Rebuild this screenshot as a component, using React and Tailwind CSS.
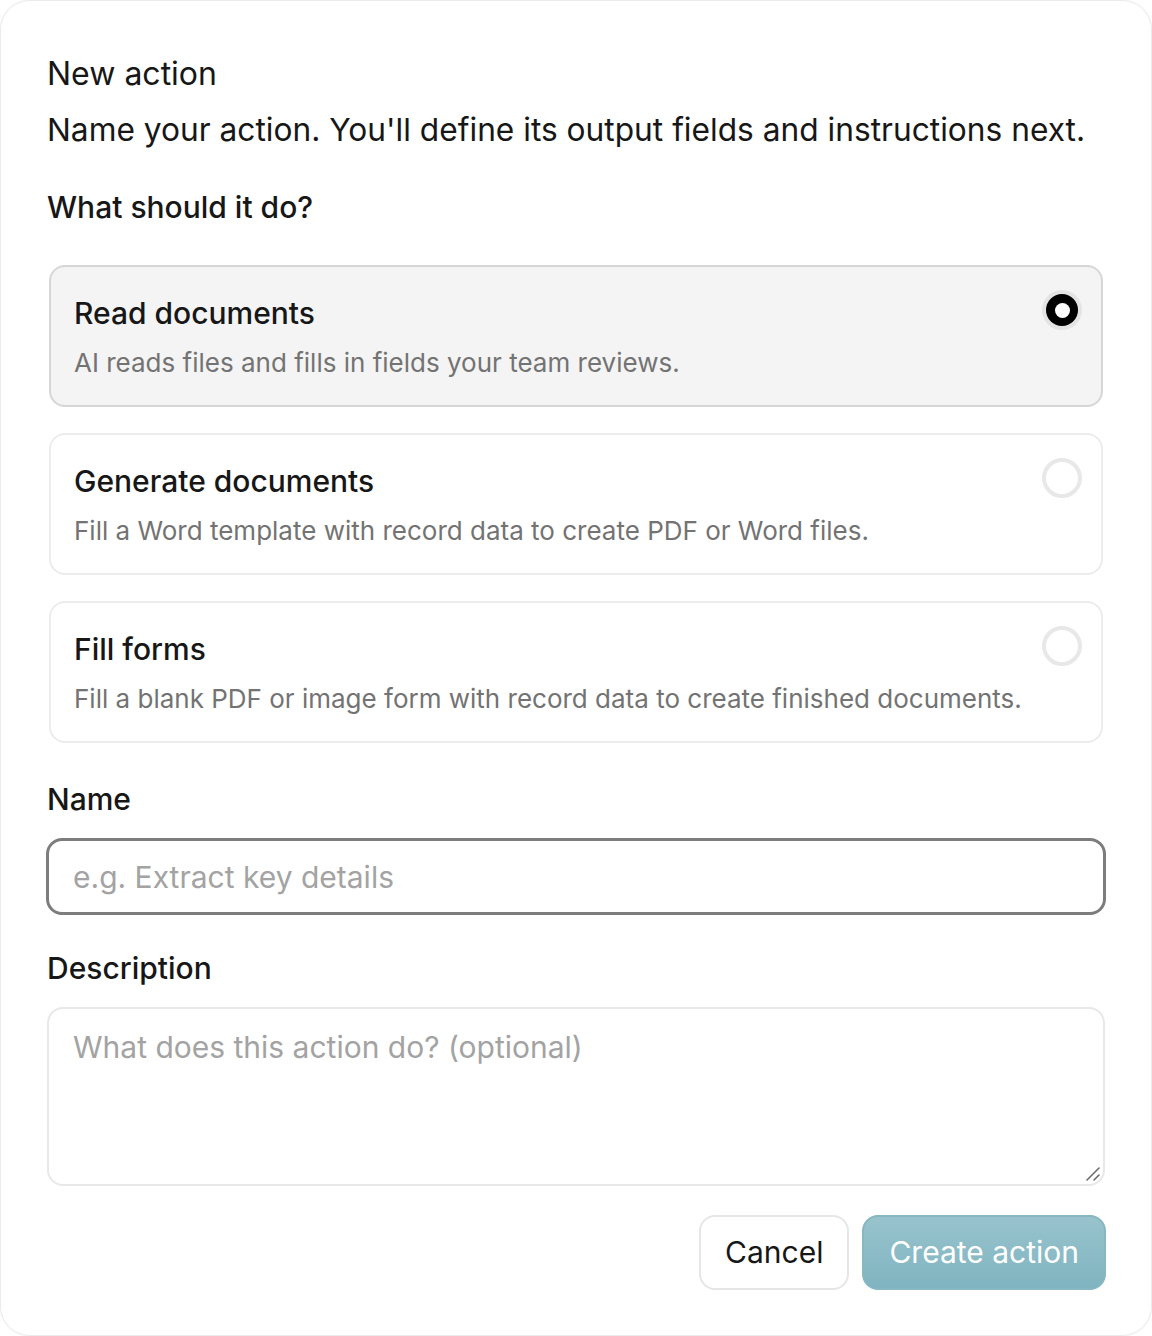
import React, { useState } from 'react';

const options = [
  {
    id: 'read',
    title: 'Read documents',
    description: 'AI reads files and fills in fields your team reviews.',
  },
  {
    id: 'generate',
    title: 'Generate documents',
    description: 'Fill a Word template with record data to create PDF or Word files.',
  },
  {
    id: 'fill',
    title: 'Fill forms',
    description: 'Fill a blank PDF or image form with record data to create finished documents.',
  },
];

const Radio = ({ checked }) => (
  <span
    className={
      checked
        ? 'flex h-[40px] w-[40px] shrink-0 items-center justify-center rounded-full bg-[#e4e4e4]'
        : 'flex h-[40px] w-[40px] shrink-0 items-center justify-center rounded-full border-[4px] border-[#e8e8e8] bg-white'
    }
  >
    {checked && (
      <span className="flex h-[32px] w-[32px] items-center justify-center rounded-full bg-black">
        <span className="h-[15px] w-[15px] rounded-full bg-white" />
      </span>
    )}
  </span>
);

// textarea grip, drawn so it matches the bigger two-line handle
const Grip = () => (
  <svg width="16" height="16" viewBox="0 0 16 16" className="pointer-events-none absolute right-[4px] bottom-[4px]">
    <path d="M2 14 L14 2" stroke="#6b6b6b" strokeWidth="1.6" strokeLinecap="round" />
    <path d="M9 14 L14 9" stroke="#6b6b6b" strokeWidth="1.6" strokeLinecap="round" />
  </svg>
);

export default function App() {
  const [selected, setSelected] = useState('read');

  return (
    <div
      className="h-[1336px] w-[1152px] bg-white text-[#171717]"
      style={{ fontFamily: 'Inter, "Noto Sans", sans-serif' }}
    >
      <div className="flex h-full flex-col rounded-[30px] border border-[#ececec] bg-white px-[46px] pt-[53px] pb-[45px] shadow-[0_0_3px_rgba(0,0,0,0.06)]">
        <h2 className="text-[32px] leading-[40px] font-normal">New action</h2>
        <p className="mt-[16px] text-[31.7px] leading-[40px]">
          Name your action. You'll define its output fields and instructions next.
        </p>

        <h3 className="mt-[39px] text-[30px] leading-[36px] font-medium">What should it do?</h3>

        <div className="mt-[40px] flex flex-col gap-[26px] px-[2px]">
          {options.map((opt) => {
            const active = selected === opt.id;
            return (
              <button
                key={opt.id}
                onClick={() => setSelected(opt.id)}
                className={
                  active
                    ? 'flex items-start justify-between rounded-[16px] border-2 border-[#d6d6d6] bg-[#f4f4f4] pt-[28px] pb-[24px] pl-[23px] pr-[19px] text-left'
                    : 'flex items-start justify-between rounded-[16px] border-2 border-[#ececec] bg-white pt-[28px] pb-[24px] pl-[23px] pr-[19px] text-left'
                }
              >
                <div className="flex flex-col gap-[14px]">
                  <span className="text-[30px] leading-[36px] font-medium text-[#171717]">{opt.title}</span>
                  <span className="text-[26px] leading-[36px] text-[#737373]">{opt.description}</span>
                </div>
                <span className="-mt-[5px]">
                  <Radio checked={active} />
                </span>
              </button>
            );
          })}
        </div>

        <label className="mt-[38px] text-[30px] leading-[36px] font-medium">Name</label>
        <input
          className="-mx-[1px] mt-[21px] h-[77px] rounded-[16px] border-[3px] border-[#7d7d7d] px-[24px] text-[30px] text-[#171717] outline-none placeholder:text-[#a3a3a3]"
          placeholder="e.g. Extract key details"
        />

        <label className="mt-[35px] text-[30px] leading-[36px] font-medium">Description</label>
        <div className="relative mt-[21px]">
          <textarea
            className="block h-[179px] w-full resize-none rounded-[16px] border-2 border-[#e8e8e8] px-[24px] pt-[20px] text-[30px] leading-[36px] outline-none placeholder:text-[#a3a3a3]"
            placeholder="What does this action do? (optional)"
          />
          <Grip />
        </div>

        <div className="-mr-[1px] mt-[29px] flex justify-end gap-[13px]">
          <button className="h-[75px] rounded-[16px] border-2 border-[#e6e6e6] bg-white px-[24px] text-[30px] text-[#171717]">
            Cancel
          </button>
          <button className="h-[75px] rounded-[16px] border-2 border-[#86b7c2] bg-gradient-to-b from-[#98c3cd] to-[#7fb4c0] px-[25px] text-[30px] text-white">
            Create action
          </button>
        </div>
      </div>
    </div>
  );
}
